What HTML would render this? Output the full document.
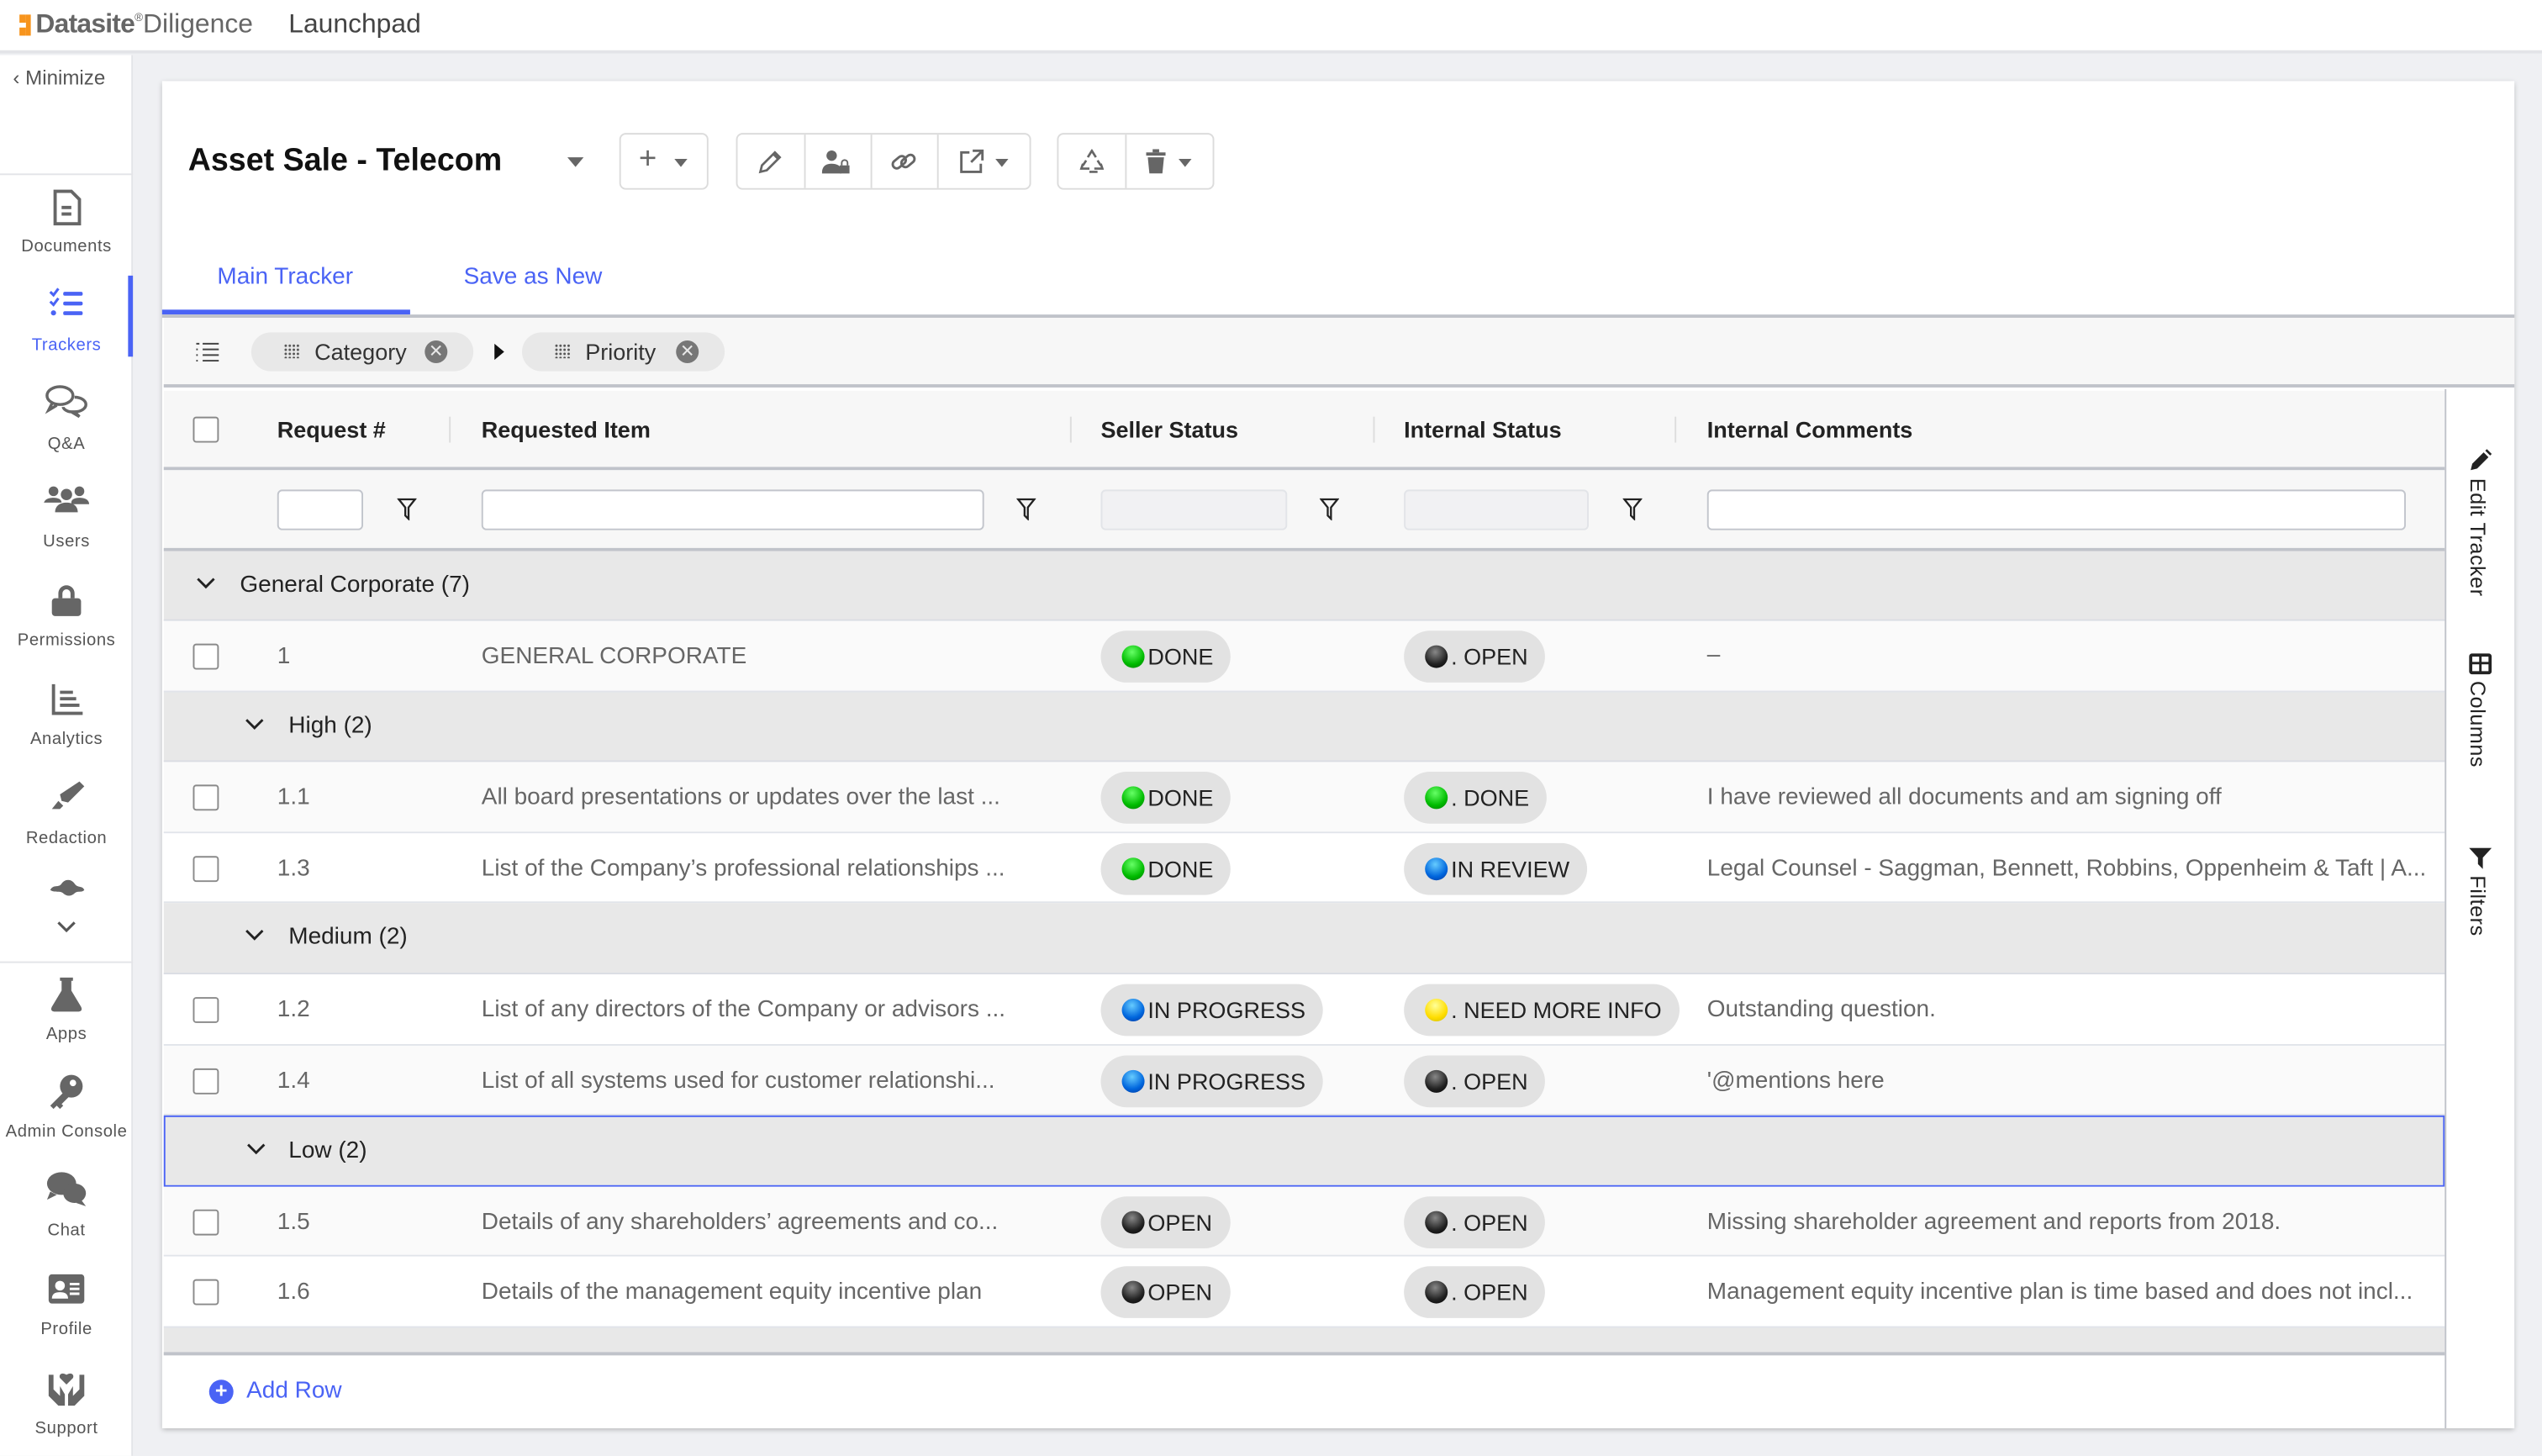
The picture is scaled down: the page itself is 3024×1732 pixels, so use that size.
<!DOCTYPE html>
<html><head><meta charset="utf-8"><style>
*{box-sizing:border-box;margin:0;padding:0}
html,body{width:3024px;height:1732px;overflow:hidden;background:#eff0f3}
#s{position:absolute;left:0;top:0;width:1568px;height:898px;transform:scale(1.928571);transform-origin:0 0;font-family:"Liberation Sans",sans-serif;color:#222;background:#eff0f3}
.a{position:absolute}
.sb{left:0;top:34px;width:82px;height:864px;background:#fff;border-right:1px solid #e3e4e8}
.ni{position:absolute;left:0;width:82px;text-align:center;font-size:10.5px;color:#555;letter-spacing:.3px}
.ic{position:absolute;left:29px;width:24px;height:24px}
.row{position:absolute;left:101px;width:1407px;font-size:14.5px;color:#666}
.grp{background:#e8e8e8;border-bottom:1px solid #dadde3;color:#222}
.dat{border-bottom:1px solid #e1e4ea}
.cb{position:absolute;left:18px;width:16px;height:16px;border:1.5px solid #8a8a8a;border-radius:2px;background:#fff}
.pill{position:absolute;height:32px;border-radius:16px;background:#e2e2e2;color:#222;font-size:14px;line-height:32px;padding:0 11px 0 13px;white-space:nowrap}
.dot{display:inline-block;width:14px;height:14px;border-radius:50%;vertical-align:-2px;margin-right:2px}
.g{background:radial-gradient(circle at 45% 30%,#6f6,#0b0 60%,#070)}
.k{background:radial-gradient(circle at 45% 30%,#888,#222 60%,#000)}
.b{background:radial-gradient(circle at 45% 30%,#6cf,#06d 60%,#039)}
.y{background:radial-gradient(circle at 45% 30%,#ff9,#fd0 60%,#cb0)}
.t{position:absolute;white-space:nowrap}
.btn{position:absolute;top:82px;height:35px;border:1px solid #dcdcdc;border-radius:4px;background:#fff}
.dv{position:absolute;top:0;width:1px;height:33px;background:#dcdcdc}
.car{display:inline-block;width:0;height:0;border-left:4.5px solid transparent;border-right:4.5px solid transparent;border-top:5px solid #666}
.fin{position:absolute;top:302px;height:25px;border:1px solid #c2c5cc;border-radius:3px;background:#fff}
.vt{position:absolute;writing-mode:vertical-rl;font-size:13px;color:#222;letter-spacing:.3px}
.hd{position:absolute;top:212px;width:10px;height:9px;background-image:radial-gradient(circle,#555 0.7px,transparent 0.8px);background-size:2.5px 2.5px}
</style></head><body><div id="s">
<div class="a" style="left:0;top:0;width:1568px;height:33px;background:#fff;border-bottom:2px solid #e3e4e8"></div>
<div class="a" style="left:12px;top:9px;width:4px;height:5px;background:#f7941d"></div>
<div class="a" style="left:12px;top:17px;width:4px;height:5px;background:#f7941d"></div>
<div class="a" style="left:16px;top:9px;width:3px;height:13px;background:#f7941d"></div>
<div class="t" style="left:22px;top:6px;font-size:16.5px;color:#666"><b style="letter-spacing:-.4px">Datasite</b><span style="font-size:7px;vertical-align:7px">®</span>Diligence</div>
<div class="t" style="left:178px;top:6px;font-size:16.5px;color:#444">Launchpad</div>
<div class="a sb"></div>
<div class="t" style="left:8px;top:41px;font-size:12.5px;color:#555">‹ Minimize</div>
<div class="a" style="left:0;top:107px;width:82px;height:1px;background:#e3e4e8"></div>
<div class="a" style="left:0;top:593px;width:82px;height:1px;background:#e3e4e8"></div>
<div class="a" style="left:79px;top:170px;width:3px;height:50px;background:#4a63f5"></div>
<svg class="ic" style="top:116px" viewBox="0 0 24 24"><path d="M5 2h10l5 5v15H5z" fill="none" stroke="#666" stroke-width="2"/><path d="M9 12h6M9 16h6" stroke="#666" stroke-width="2"/></svg>
<div class="ni" style="top:146px">Documents</div>
<svg class="ic" style="top:176px" viewBox="0 0 24 24" fill="#4a63f5"><path d="M2 4l2 2 3-4" stroke="#4a63f5" stroke-width="1.6" fill="none"/><path d="M2 10l2 2 3-4" stroke="#4a63f5" stroke-width="1.6" fill="none"/><circle cx="4" cy="17" r="1.6"/><rect x="10" y="4" width="12" height="2.4" rx="1"/><rect x="10" y="10" width="12" height="2.4" rx="1"/><rect x="10" y="16" width="12" height="2.4" rx="1"/></svg>
<div class="ni" style="top:207px;color:#4a63f5">Trackers</div>
<svg class="ic" style="top:236px;left:27px;width:28px" viewBox="0 0 28 24" fill="none" stroke="#666" stroke-width="1.8"><ellipse cx="10" cy="8" rx="8" ry="5.5"/><path d="M5 13l-2 4 5-3"/><path d="M19 9c4 0 7 2 7 4.5s-3 4.5-7 4.5l3 3-5-3c-3 0-5-2-5-3"/></svg>
<div class="ni" style="top:268px">Q&amp;A</div>
<svg class="ic" style="top:297px;left:27px;width:28px" viewBox="0 0 28 20" fill="#666"><circle cx="6" cy="4" r="3"/><circle cx="22" cy="4" r="3"/><circle cx="14" cy="6" r="3.5"/><path d="M0 12c0-3 3-4 6-4s5 1 5 3H0zM17 11c0-2 2-3 5-3s6 1 6 4H17zM7 17c0-4 3-6 7-6s7 2 7 6z"/></svg>
<div class="ni" style="top:328px">Users</div>
<svg class="ic" style="top:358px" viewBox="0 0 24 24" fill="#666"><path d="M7 11V8a5 5 0 0110 0v3h-2.5V8a2.5 2.5 0 00-5 0v3z"/><rect x="3" y="11" width="18" height="11" rx="2"/></svg>
<div class="ni" style="top:389px">Permissions</div>
<svg class="ic" style="top:419px" viewBox="0 0 24 24" fill="none" stroke="#666" stroke-width="2"><path d="M4 3v18h18M8 8h8M8 12h10M8 16h12"/></svg>
<div class="ni" style="top:450px">Analytics</div>
<svg class="ic" style="top:480px" viewBox="0 0 24 24" fill="#666"><path d="M20 2l3 3-10 10-4-1-1-4z"/><path d="M7 14l3 3-2 2H3z"/></svg>
<div class="ni" style="top:511px">Redaction</div>
<svg class="ic" style="top:540px;height:14px" viewBox="0 0 24 14" fill="#666"><path d="M2 9c2-4 5-1 7-4s6-3 8 0 5 1 6 4c-2 2-4 0-6 2s-5 2-7 0-5 0-8-2z"/></svg>
<svg class="ic" style="top:565px;left:35px;width:12px;height:12px" viewBox="0 0 12 12"><path d="M1 4l5 5 5-5" stroke="#555" stroke-width="1.6" fill="none"/></svg>
<svg class="ic" style="top:601px" viewBox="0 0 24 24" fill="#666"><path d="M8 2h8v2h-1v6l6 10c1 2 0 3-2 3H5c-2 0-3-1-2-3l6-10V4H8z"/></svg>
<div class="ni" style="top:632px">Apps</div>
<svg class="ic" style="top:661px" viewBox="0 0 24 24" fill="#666"><circle cx="15" cy="9" r="7"/><path d="M11 12l-9 9 2 2 2-2 2 2 2-2-1-1 5-5z"/><circle cx="16" cy="7" r="2" fill="#fff"/></svg>
<div class="ni" style="top:692px">Admin Console</div>
<svg class="ic" style="top:722px;left:27px;width:28px" viewBox="0 0 28 24" fill="#666"><ellipse cx="11" cy="8" rx="9" ry="7"/><path d="M4 13l-2 5 6-3z"/><ellipse cx="19" cy="14" rx="7" ry="6"/><path d="M23 18l3 4-6-2z"/></svg>
<div class="ni" style="top:753px">Chat</div>
<svg class="ic" style="top:783px" viewBox="0 0 24 24"><rect x="1" y="3" width="22" height="18" rx="2" fill="#666"/><circle cx="8" cy="10" r="3" fill="#fff"/><path d="M3 18c0-3 2-4 5-4s5 1 5 4z" fill="#fff"/><path d="M14 9h6M14 12h6M14 15h6" stroke="#fff" stroke-width="1.5"/></svg>
<div class="ni" style="top:814px">Profile</div>
<svg class="ic" style="top:844px" viewBox="0 0 24 24" fill="#666"><path d="M12 10l-4-4c-1-2 1-4 4-2 3-2 5 0 4 2z"/><path d="M1 4h3v9l4 4V11l3 5v7H7l-6-6zM23 4h-3v9l-4 4V11l-3 5v7h4l6-6z"/></svg>
<div class="ni" style="top:875px">Support</div>
<div class="a" style="left:100px;top:50px;width:1451px;height:831px;background:#fff;box-shadow:0 1px 3px rgba(0,0,0,.25)"></div>
<div class="t" style="left:116px;top:88px;font-size:19.5px;font-weight:bold;color:#111">Asset Sale - Telecom</div>
<div class="a car" style="left:350px;top:97px;border-left-width:5px;border-right-width:5px;border-top-width:6px"></div>
<div class="btn" style="left:382px;width:55px"><span class="t" style="left:11px;top:5px;font-size:19px;color:#666">+</span><span class="a car" style="left:33px;top:15px"></span></div>
<div class="btn" style="left:454px;width:182px">
<div class="dv" style="left:41px"></div><div class="dv" style="left:82px"></div><div class="dv" style="left:123px"></div>
<svg class="a" style="left:12px;top:9px" width="16" height="16" viewBox="0 0 16 16" fill="none" stroke="#666" stroke-width="1.4"><path d="M2 14l1-4 8-8 3 3-8 8zM10 3l3 3"/></svg>
<svg class="a" style="left:52px;top:9px" width="18" height="16" viewBox="0 0 18 16" fill="#666"><circle cx="6" cy="4" r="3.2"/><path d="M0 15c0-5 3-6 6-6s5 1 6 3v3z"/><rect x="11" y="10" width="6" height="5"/><path d="M12.2 10V8.5a1.8 1.8 0 013.6 0V10" stroke="#666" fill="none"/></svg>
<svg class="a" style="left:94px;top:9px" width="17" height="16" viewBox="0 0 17 16" fill="none" stroke="#666" stroke-width="1.5"><rect x="1" y="6" width="9" height="5" rx="2.5" transform="rotate(-40 5 8)"/><rect x="7" y="5" width="9" height="5" rx="2.5" transform="rotate(-40 11 8)"/></svg>
<svg class="a" style="left:137px;top:9px" width="15" height="15" viewBox="0 0 15 15" fill="none" stroke="#666" stroke-width="1.5"><path d="M6 2H1v12h12V9M8 1h6v6M14 1L7 8"/></svg>
<span class="a car" style="left:159px;top:15px"></span>
</div>
<div class="btn" style="left:652px;width:97px"><div class="dv" style="left:41px"></div>
<svg class="a" style="left:13px;top:9px" width="15" height="16" viewBox="0 0 15 16" fill="none" stroke="#666" stroke-width="1.4"><path d="M5 5l2.5-4L10 5M2 9l-1 3h5M13 9l1 3H9M4 7L2 10M11 7l2 3M6 14h5"/></svg>
<svg class="a" style="left:54px;top:9px" width="12" height="15" viewBox="0 0 12 15" fill="#666"><rect x="0" y="2" width="12" height="2"/><rect x="4" y="0" width="4" height="2"/><path d="M1 5h10l-1 10H2z"/></svg>
<span class="a car" style="left:74px;top:15px"></span></div>
<div class="t" style="left:134px;top:163px;font-size:14.5px;color:#4a63f5">Main Tracker</div>
<div class="t" style="left:286px;top:163px;font-size:14.5px;color:#4a63f5">Save as New</div>
<div class="a" style="left:100px;top:191px;width:153px;height:3px;background:#4a63f5"></div>
<div class="a" style="left:100px;top:194px;width:1451px;height:2px;background:#c0c3ca"></div>
<div class="a" style="left:101px;top:196px;width:1450px;height:43px;background:#f7f7f7;border-bottom:2px solid #c0c3ca"></div>
<svg class="a" style="left:121px;top:211px" width="14" height="12" viewBox="0 0 14 12" fill="none" stroke="#444" stroke-width="1"><path d="M0 1h2M4 1h10M4 4.5h10M4 8h10M4 11.5h10M0 4.5h1M0 8h1M0 11.5h1"/></svg>
<div class="a" style="left:155px;top:205px;width:137px;height:24px;border-radius:12px;background:#e8e8e8"></div>
<div class="hd" style="left:175px"></div>
<div class="t" style="left:194px;top:209px;font-size:14px;color:#333">Category</div>
<div class="a" style="left:262px;top:210px;width:14px;height:14px;border-radius:50%;background:#777;color:#e8e8e8;font-size:11px;line-height:14px;text-align:center">✕</div>
<div class="a" style="left:305px;top:212px;width:0;height:0;border-top:5px solid transparent;border-bottom:5px solid transparent;border-left:6px solid #111"></div>
<div class="a" style="left:322px;top:205px;width:125px;height:24px;border-radius:12px;background:#e8e8e8"></div>
<div class="hd" style="left:342px"></div>
<div class="t" style="left:361px;top:209px;font-size:14px;color:#333">Priority</div>
<div class="a" style="left:417px;top:210px;width:14px;height:14px;border-radius:50%;background:#777;color:#e8e8e8;font-size:11px;line-height:14px;text-align:center">✕</div>
<div class="row" style="top:241px;height:49px;background:#f7f7f7;border-bottom:2px solid #c0c3ca;color:#222;font-weight:bold;font-size:14px">
<div class="cb" style="top:16px"></div>
<div class="t" style="left:70px;top:16px">Request #</div>
<div class="a" style="left:176px;top:16px;width:1px;height:16px;background:#ddd"></div>
<div class="t" style="left:196px;top:16px">Requested Item</div>
<div class="a" style="left:559px;top:16px;width:1px;height:16px;background:#ddd"></div>
<div class="t" style="left:578px;top:16px">Seller Status</div>
<div class="a" style="left:746px;top:16px;width:1px;height:16px;background:#ddd"></div>
<div class="t" style="left:765px;top:16px">Internal Status</div>
<div class="a" style="left:932px;top:16px;width:1px;height:16px;background:#ddd"></div>
<div class="t" style="left:952px;top:16px">Internal Comments</div>
</div>
<div class="row" style="top:290px;height:50px;background:#f7f7f7;border-bottom:2px solid #c0c3ca"></div>
<div class="fin" style="left:171px;width:53px"></div>
<div class="fin" style="left:297px;width:310px"></div>
<div class="fin" style="left:679px;width:115px;background:#f1f1f3;border-color:#e2e4e8"></div>
<div class="fin" style="left:866px;width:114px;background:#f1f1f3;border-color:#e2e4e8"></div>
<div class="fin" style="left:1053px;width:431px"></div>
<svg class="a" style="left:245px;top:307px" width="12" height="14" viewBox="0 0 12 14" fill="none" stroke="#222" stroke-width="1.2"><path d="M1 1h10L7 6v7L5 11V6z"/></svg>
<svg class="a" style="left:627px;top:307px" width="12" height="14" viewBox="0 0 12 14" fill="none" stroke="#222" stroke-width="1.2"><path d="M1 1h10L7 6v7L5 11V6z"/></svg>
<svg class="a" style="left:814px;top:307px" width="12" height="14" viewBox="0 0 12 14" fill="none" stroke="#222" stroke-width="1.2"><path d="M1 1h10L7 6v7L5 11V6z"/></svg>
<svg class="a" style="left:1001px;top:307px" width="12" height="14" viewBox="0 0 12 14" fill="none" stroke="#222" stroke-width="1.2"><path d="M1 1h10L7 6v7L5 11V6z"/></svg>
<div class="row grp" style="top:340px;height:43px"><svg class="a" style="left:20px;top:16px" width="12" height="8" viewBox="0 0 12 8"><path d="M1 1l5 5 5-5" stroke="#222" stroke-width="1.5" fill="none"/></svg><div class="t" style="left:47px;top:13px">General Corporate (7)</div></div>
<div class="row dat" style="top:383px;height:44px;background:#fafafa"><div class="cb" style="top:14px"></div><div class="t" style="left:70px;top:14px">1</div><div class="t" style="left:196px;top:14px">GENERAL CORPORATE</div><div class="pill" style="left:578px;top:6px"><span class="dot g"></span>DONE</div><div class="pill" style="left:765px;top:6px"><span class="dot k"></span>. OPEN</div><div class="t" style="left:952px;top:13px">–</div></div>
<div class="row grp" style="top:427px;height:43px"><svg class="a" style="left:50px;top:16px" width="12" height="8" viewBox="0 0 12 8"><path d="M1 1l5 5 5-5" stroke="#222" stroke-width="1.5" fill="none"/></svg><div class="t" style="left:77px;top:13px">High (2)</div></div>
<div class="row dat" style="top:470px;height:44px;background:#fafafa"><div class="cb" style="top:14px"></div><div class="t" style="left:70px;top:14px">1.1</div><div class="t" style="left:196px;top:14px">All board presentations or updates over the last ...</div><div class="pill" style="left:578px;top:6px"><span class="dot g"></span>DONE</div><div class="pill" style="left:765px;top:6px"><span class="dot g"></span>. DONE</div><div class="t" style="left:952px;top:14px">I have reviewed all documents and am signing off</div></div>
<div class="row dat" style="top:514px;height:43px;background:#fff"><div class="cb" style="top:14px"></div><div class="t" style="left:70px;top:14px">1.3</div><div class="t" style="left:196px;top:14px">List of the Company’s professional relationships ...</div><div class="pill" style="left:578px;top:6px"><span class="dot g"></span>DONE</div><div class="pill" style="left:765px;top:6px"><span class="dot b"></span>IN REVIEW</div><div class="t" style="left:952px;top:14px">Legal Counsel - Saggman, Bennett, Robbins, Oppenheim &amp; Taft | A...</div></div>
<div class="row grp" style="top:557px;height:44px"><svg class="a" style="left:50px;top:16px" width="12" height="8" viewBox="0 0 12 8"><path d="M1 1l5 5 5-5" stroke="#222" stroke-width="1.5" fill="none"/></svg><div class="t" style="left:77px;top:13px">Medium (2)</div></div>
<div class="row dat" style="top:601px;height:44px;background:#fff"><div class="cb" style="top:14px"></div><div class="t" style="left:70px;top:14px">1.2</div><div class="t" style="left:196px;top:14px">List of any directors of the Company or advisors ...</div><div class="pill" style="left:578px;top:6px"><span class="dot b"></span>IN PROGRESS</div><div class="pill" style="left:765px;top:6px"><span class="dot y"></span>. NEED MORE INFO</div><div class="t" style="left:952px;top:14px">Outstanding question.</div></div>
<div class="row dat" style="top:645px;height:43px;background:#fafafa"><div class="cb" style="top:14px"></div><div class="t" style="left:70px;top:14px">1.4</div><div class="t" style="left:196px;top:14px">List of all systems used for customer relationshi...</div><div class="pill" style="left:578px;top:6px"><span class="dot b"></span>IN PROGRESS</div><div class="pill" style="left:765px;top:6px"><span class="dot k"></span>. OPEN</div><div class="t" style="left:952px;top:14px">'@mentions here</div></div>
<div class="row grp" style="top:688px;height:44px;border:1.5px solid #4a63f5;border-bottom:1px solid #4a63f5"><svg class="a" style="left:50px;top:16px" width="12" height="8" viewBox="0 0 12 8"><path d="M1 1l5 5 5-5" stroke="#222" stroke-width="1.5" fill="none"/></svg><div class="t" style="left:76px;top:13px">Low (2)</div></div>
<div class="row dat" style="top:732px;height:43px;background:#fafafa"><div class="cb" style="top:14px"></div><div class="t" style="left:70px;top:14px">1.5</div><div class="t" style="left:196px;top:14px">Details of any shareholders’ agreements and co...</div><div class="pill" style="left:578px;top:6px"><span class="dot k"></span>OPEN</div><div class="pill" style="left:765px;top:6px"><span class="dot k"></span>. OPEN</div><div class="t" style="left:952px;top:14px">Missing shareholder agreement and reports from 2018.</div></div>
<div class="row dat" style="top:775px;height:44px;background:#fff"><div class="cb" style="top:14px"></div><div class="t" style="left:70px;top:14px">1.6</div><div class="t" style="left:196px;top:14px">Details of the management equity incentive plan</div><div class="pill" style="left:578px;top:6px"><span class="dot k"></span>OPEN</div><div class="pill" style="left:765px;top:6px"><span class="dot k"></span>. OPEN</div><div class="t" style="left:952px;top:14px">Management equity incentive plan is time based and does not incl...</div></div>
<div class="row" style="top:819px;height:17px;background:#e8e8e8;border-bottom:2px solid #c0c3ca"></div>
<div class="a" style="left:129px;top:851px;width:15px;height:15px;border-radius:50%;background:#4a63f5;color:#fff;font-size:13px;line-height:14px;text-align:center;font-weight:bold">+</div>
<div class="t" style="left:152px;top:850px;font-size:14.5px;color:#4a63f5">Add Row</div>
<div class="a" style="left:1508px;top:240px;width:1px;height:641px;background:#c0c3ca"></div>
<svg class="a" style="left:1523px;top:277px" width="14" height="14" viewBox="0 0 14 14" fill="#222"><path d="M1 13l1-4 7-7 3 3-7 7z"/><path d="M10 1l3 3 1-1-3-3z"/></svg>
<div class="vt" style="left:1521px;top:295px">Edit Tracker</div>
<svg class="a" style="left:1523px;top:403px" width="14" height="13" viewBox="0 0 14 13"><rect x="1" y="1" width="12" height="11" rx="1" fill="none" stroke="#222" stroke-width="2"/><path d="M7 1v11M1 6h12" stroke="#222" stroke-width="1.5"/></svg>
<div class="vt" style="left:1521px;top:420px">Columns</div>
<svg class="a" style="left:1523px;top:523px" width="14" height="13" viewBox="0 0 14 13" fill="#222"><path d="M0 0h14L8.5 6v7l-3-3V6z"/></svg>
<div class="vt" style="left:1521px;top:540px">Filters</div>
</div></body></html>
